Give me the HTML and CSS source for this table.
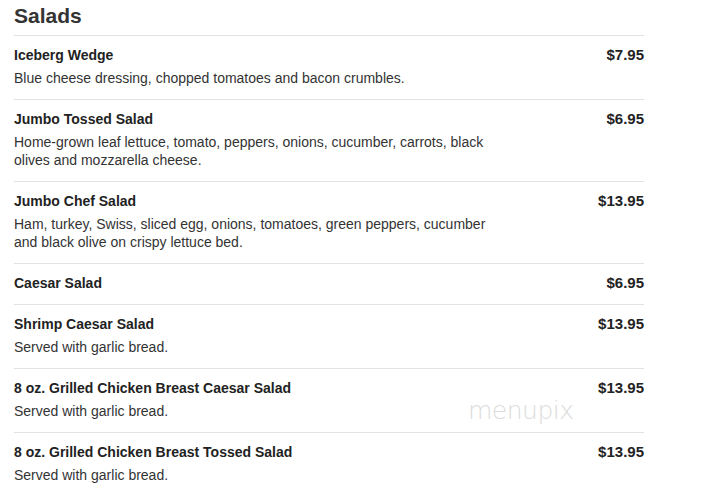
FILE: index.html
```html
<!DOCTYPE html>
<html>
<head>
<meta charset="utf-8">
<link rel="stylesheet" href="styles.css">
</head>
<body>
<div class="menu">
  <h2 class="section-title">Salads</h2>
  <div class="item">
    <div class="item-head"><span class="item-name">Iceberg Wedge</span><span class="item-price">$7.95</span></div>
    <div class="item-desc">Blue cheese dressing, chopped tomatoes and bacon crumbles.</div>
  </div>
  <div class="item">
    <div class="item-head"><span class="item-name">Jumbo Tossed Salad</span><span class="item-price">$6.95</span></div>
    <div class="item-desc">Home-grown leaf lettuce, tomato, peppers, onions, cucumber, carrots, black olives and mozzarella cheese.</div>
  </div>
  <div class="item">
    <div class="item-head"><span class="item-name">Jumbo Chef Salad</span><span class="item-price">$13.95</span></div>
    <div class="item-desc">Ham, turkey, Swiss, sliced egg, onions, tomatoes, green peppers, cucumber and black olive on crispy lettuce bed.</div>
  </div>
  <div class="item">
    <div class="item-head"><span class="item-name">Caesar Salad</span><span class="item-price">$6.95</span></div>
  </div>
  <div class="item">
    <div class="item-head"><span class="item-name">Shrimp Caesar Salad</span><span class="item-price">$13.95</span></div>
    <div class="item-desc">Served with garlic bread.</div>
  </div>
  <div class="item watermarked">
    <div class="item-head"><span class="item-name">8 oz. Grilled Chicken Breast Caesar Salad</span><span class="item-price">$13.95</span></div>
    <div class="item-desc">Served with garlic bread.</div>
    <span class="watermark">menupix</span>
  </div>
  <div class="item">
    <div class="item-head"><span class="item-name">8 oz. Grilled Chicken Breast Tossed Salad</span><span class="item-price">$13.95</span></div>
    <div class="item-desc">Served with garlic bread.</div>
  </div>
</div>
</body>
</html>
```
FILE: styles.css
```css
html, body {
  margin: 0;
  padding: 0;
  background: #fff;
}
body {
  font-family: "Liberation Sans", Arial, sans-serif;
  color: #333;
}
.menu {
  width: 630px;
  margin-left: 14px;
}
.section-title {
  margin: 0;
  padding: 4px 0 7px;
  font-size: 21px;
  line-height: 24px;
  font-weight: bold;
  color: #333;
}
.item {
  border-top: 1px solid #e3e3e3;
  padding: 10px 0 12px;
}
.watermarked {
  position: relative;
}
.item-head {
  display: flex;
  justify-content: space-between;
  align-items: flex-start;
  line-height: 18px;
}
.item-name {
  font-size: 14px;
  font-weight: bold;
  color: #222;
}
.item-price {
  font-size: 15px;
  font-weight: bold;
  color: #222;
}
.item-desc {
  margin-top: 5px;
  max-width: 480px;
  font-size: 14px;
  line-height: 18px;
  color: #333;
}
.watermark {
  position: absolute;
  left: 454px;
  top: 27px;
  font-family: "DejaVu Sans", sans-serif;
  font-weight: 200;
  font-size: 25px;
  letter-spacing: -0.5px;
  color: #dcdcdc;
}
```
